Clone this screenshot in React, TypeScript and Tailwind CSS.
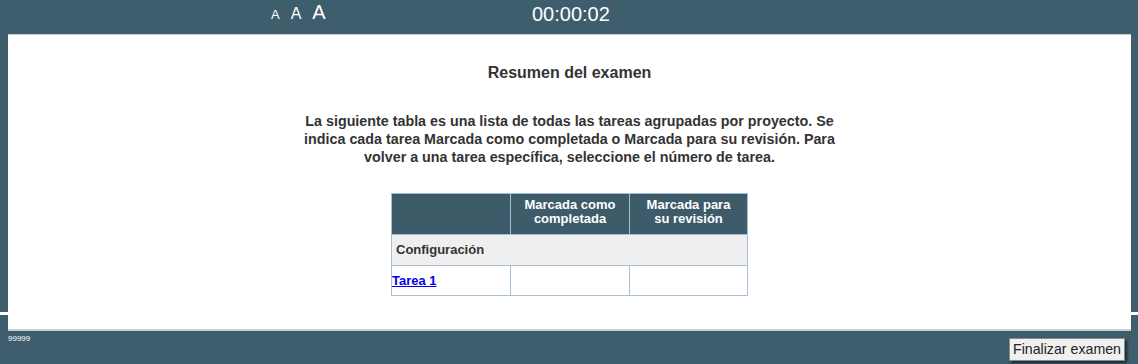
export default function App() {
  return (
    <div className="relative flex h-[364px] w-[1138px] flex-col overflow-hidden bg-[#3f5e6d] font-['Liberation_Sans',Arial,sans-serif]">
      {/* thin white stripe that runs under the panel */}
      <div className="absolute left-0 right-0 top-[312px] h-[3px] bg-white" />

      <header className="relative flex h-[34px] shrink-0 items-center text-white">
        <div className="ml-[271px] flex items-baseline gap-[11px] self-start pt-[2px]">
          <span className="text-[13px] leading-none">A</span>
          <span className="text-[16px] leading-none">A</span>
          <span className="text-[20px] leading-none">A</span>
        </div>
        <div className="absolute left-[532px] top-[4px] text-[20px] leading-none">00:00:02</div>
      </header>

      <main className="relative ml-[8px] mr-[7px] h-[297px] shrink-0 border-t border-b-2 border-[#c9d0d4] bg-white text-[#333]">
        <h1 className="mt-[28px] text-center text-[16px] font-bold leading-[20px]">Resumen del examen</h1>
        <p className="mx-auto mt-[29px] w-[550px] text-center text-[14.3px] font-bold leading-[18px]">
          La siguiente tabla es una lista de todas las tareas agrupadas por proyecto. Se indica cada tarea Marcada como completada o Marcada para su revisión. Para volver a una tarea específica, seleccione el número de tarea.
        </p>
        <table className="mx-auto mt-[27px] w-[357px] border-collapse text-[13px]">
          <thead>
            <tr className="h-[41px] bg-[#3e5b6a] text-white">
              <th className="w-[119px] border border-[#a6bfd8]" />
              <th className="w-[119px] border border-[#a6bfd8] pb-[4px] font-bold leading-[14px]">
                Marcada como
                <br />
                completada
              </th>
              <th className="border border-[#a6bfd8] pb-[4px] font-bold leading-[14px]">
                Marcada para
                <br />
                su revisión
              </th>
            </tr>
          </thead>
          <tbody>
            <tr className="h-[31px] bg-[#efefef]">
              <td colSpan={3} className="border border-[#a6bfd8] px-[4px] text-left font-bold">
                Configuración
              </td>
            </tr>
            <tr className="h-[30px]">
              <td className="border border-[#a6bfd8] text-left">
                <a href="#" className="font-bold text-[#0000ee] underline">
                  Tarea 1
                </a>
              </td>
              <td className="border border-[#a6bfd8]" />
              <td className="border border-[#a6bfd8]" />
            </tr>
          </tbody>
        </table>
      </main>

      <footer className="relative flex flex-1 items-start justify-between px-[8px]">
        <span className="mt-[4px] text-[8px] leading-none text-white">99999</span>
        <button className="mr-[5px] mt-[7px] h-[23px] border border-[#8a8a8a] bg-[#f0f0f0] px-[3px] text-[14.2px] leading-none text-[#222] shadow-[2px_2px_3px_rgba(0,0,0,0.6)]">
          Finalizar examen
        </button>
      </footer>
    </div>
  );
}
